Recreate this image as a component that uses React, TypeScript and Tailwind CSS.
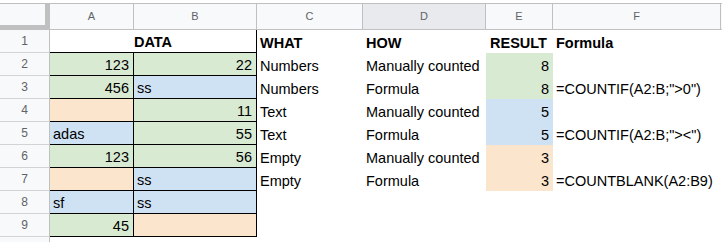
import React from "react";

const G = "bg-[#d9ead3]";
const B = "bg-[#cfe2f3]";
const O = "bg-[#fce5cd]";

type Cell = { v: string; bg: string; right?: boolean };

type Row = {
  n: number;
  a: Cell;
  b: Cell;
  c: string;
  d: string;
  e?: Cell;
  f?: string;
};

const rows: Row[] = [
  { n: 2, a: { v: "123", bg: G, right: true }, b: { v: "22", bg: G, right: true }, c: "Numbers", d: "Manually counted", e: { v: "8", bg: G } },
  { n: 3, a: { v: "456", bg: G, right: true }, b: { v: "ss", bg: B }, c: "Numbers", d: "Formula", e: { v: "8", bg: G }, f: '=COUNTIF(A2:B;">0")' },
  { n: 4, a: { v: "", bg: O }, b: { v: "11", bg: G, right: true }, c: "Text", d: "Manually counted", e: { v: "5", bg: B } },
  { n: 5, a: { v: "adas", bg: B }, b: { v: "55", bg: G, right: true }, c: "Text", d: "Formula", e: { v: "5", bg: B }, f: '=COUNTIF(A2:B;"><")' },
  { n: 6, a: { v: "123", bg: G, right: true }, b: { v: "56", bg: G, right: true }, c: "Empty", d: "Manually counted", e: { v: "3", bg: O } },
  { n: 7, a: { v: "", bg: O }, b: { v: "ss", bg: B }, c: "Empty", d: "Formula", e: { v: "3", bg: O }, f: "=COUNTBLANK(A2:B9)" },
  { n: 8, a: { v: "sf", bg: B }, b: { v: "ss", bg: B }, c: "", d: "" },
  { n: 9, a: { v: "45", bg: G, right: true }, b: { v: "", bg: O }, c: "", d: "" },
];

const RowHead = ({ n }: { n?: number }) => (
  <div className="w-[50px] h-full shrink-0 flex items-center justify-center bg-[#f8f9fa] border-r border-b border-r-[#c0c0c0] border-b-[#d3d3d3] text-[12px] text-[#5f6368]">
    {n}
  </div>
);

const DataCell = ({ cell, w }: { cell: Cell; w: string }) => (
  <div
    className={`${w} ${cell.bg} h-full shrink-0 flex items-end pb-[1px] border-r border-b border-black whitespace-nowrap ${
      cell.right ? "justify-end pr-[4px]" : "pl-[3px]"
    }`}
  >
    {cell.v}
  </div>
);

const ColHead = ({ label, w, active }: { label: string; w: string; active?: boolean }) => (
  <div
    className={`${w} h-full shrink-0 flex items-center justify-center border-r border-b border-[#c0c0c0] text-[11px] text-[#5f6368] ${
      active ? "bg-[#e8eaed]" : "bg-[#f8f9fa]"
    }`}
  >
    {label}
  </div>
);

const App: React.FC = () => {
  return (
    <div className="w-[722px] h-[242px] overflow-hidden bg-white pt-[3px] font-['Liberation_Sans',Arial,sans-serif] text-[14.5px] text-black leading-[17px]">
      {/* column headers */}
      <div className="flex h-[27px] border-t border-[#c0c0c0]">
        <div className="w-[50px] h-[26px] shrink-0 bg-[#f8f9fa] border-r-[5px] border-b-[5px] border-[#c0c0c0]" />
        <ColHead label="A" w="w-[84px]" />
        <ColHead label="B" w="w-[123px]" />
        <ColHead label="C" w="w-[106px]" />
        <ColHead label="D" w="w-[123px]" active />
        <ColHead label="E" w="w-[67px]" />
        <ColHead label="F" w="w-[168px]" />
        <div className="flex-1 h-full bg-[#f8f9fa] border-b border-[#c0c0c0]" />
      </div>

      {/* row 1 */}
      <div className="flex h-[23px]">
        <RowHead n={1} />
        <div className="w-[207px] h-full shrink-0 flex items-end justify-center pb-[1px] border-r border-b border-black font-bold">
          DATA
        </div>
        <div className="w-[106px] shrink-0 flex items-end pb-[1px] pl-[3px] font-bold">WHAT</div>
        <div className="w-[123px] shrink-0 flex items-end pb-[1px] pl-[3px] font-bold">HOW</div>
        <div className="w-[67px] shrink-0 flex items-end pb-[1px] pl-[4px] font-bold">RESULT</div>
        <div className="flex-1 flex items-end pb-[1px] pl-[3px] font-bold">Formula</div>
      </div>

      {rows.map((r) => (
        <div key={r.n} className="flex h-[23px]">
          <RowHead n={r.n} />
          <DataCell cell={r.a} w="w-[84px]" />
          <DataCell cell={r.b} w="w-[123px]" />
          <div className="w-[106px] shrink-0 flex items-end pb-[1px] pl-[3px] whitespace-nowrap">{r.c}</div>
          <div className="w-[123px] shrink-0 flex items-end pb-[1px] pl-[3px] whitespace-nowrap">{r.d}</div>
          <div className={`w-[67px] shrink-0 flex items-end justify-end pb-[1px] pr-[4px] ${r.e ? r.e.bg : ""}`}>
            {r.e?.v}
          </div>
          <div className="flex-1 flex items-end pb-[1px] pl-[3px] whitespace-nowrap">{r.f}</div>
        </div>
      ))}

      {/* row 10, cut off by the window edge */}
      <div className="flex h-[23px]">
        <RowHead />
      </div>
    </div>
  );
};

export default App;
